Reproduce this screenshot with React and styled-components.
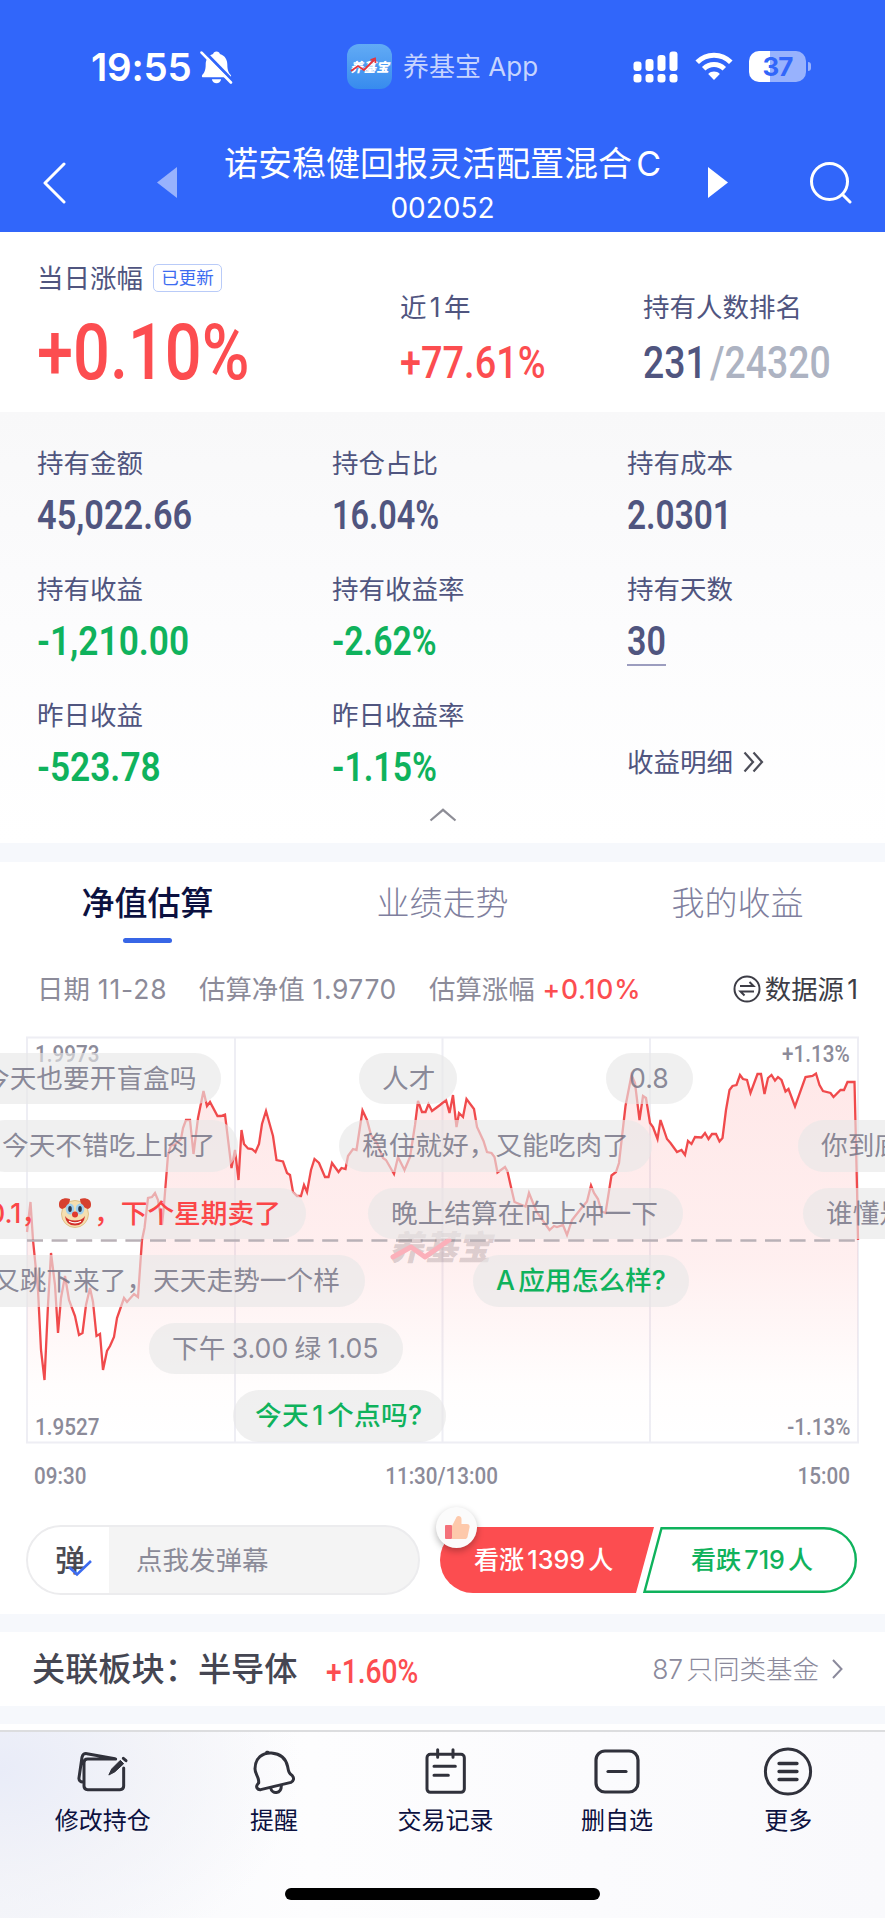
import React from "react";
import styled, { createGlobalStyle, css } from "styled-components";

const c = {
  blue: "#3166fa",
  red: "#fc4d50",
  green: "#0fb25c",
  navy: "#0c1140",
  indigo: "#50557f",
  muted: "#8c8b99",
  band: "#f6f8fc",
};

const GlobalStyle = createGlobalStyle`
  * { box-sizing: border-box; }
  body {
    margin: 0;
    background: #fff;
    font-family: Inter, "Noto Sans CJK SC", sans-serif;
    text-autospace: normal;
  }
`;

const Screen = styled.div`
  width: 885px;
  height: 1918px;
  overflow: hidden;
  display: flex;
  flex-direction: column;
  background: #fff;
`;

/* Condensed numerals */
const Num = styled.span`
  display: block;
  width: max-content;
  font-family: Roboto, sans-serif;
  font-weight: ${(p) => p.$weight || 600};
  font-size: ${(p) => p.$size}px;
  line-height: 1;
  letter-spacing: ${(p) => p.$track || 0}px;
  color: ${(p) => p.$color || c.indigo};
  transform: scaleX(${(p) => p.$scale || 0.84});
  transform-origin: ${(p) => p.$origin || "left"} center;
`;

/* ---------- header ---------- */
const Header = styled.header`
  height: 232px;
  flex: none;
  background: ${c.blue};
  color: #fff;
  display: flex;
  flex-direction: column;
`;

const StatusBar = styled.div`
  height: 133px;
  padding: 0 79px 0 91px;
  display: grid;
  grid-template-columns: 256px 1fr auto;
  align-items: center;
`;

const Clock = styled.div`
  display: flex;
  align-items: center;
  gap: 8px;
  font-size: 38.5px;
  font-weight: 600;
  line-height: 40px;
  letter-spacing: -0.2px;
`;

const AppTag = styled.div`
  display: flex;
  align-items: center;
  gap: 11px;
  font-size: 26px;
  color: #c6d4fe;
  line-height: 44px;
`;

const AppLogo = styled.div`
  width: 45px;
  height: 45px;
  border-radius: 12px;
  background: linear-gradient(#62abf5, #378bee);
  display: grid;
  place-items: center;
  position: relative;
  svg { position: absolute; left: 3px; top: 13px; }
`;

const LogoWord = styled.span`
  font-size: 13px;
  font-weight: 900;
  font-style: italic;
  color: #fff;
  line-height: 14px;
  white-space: nowrap;
`;

const StatusIcons = styled.div`
  display: flex;
  align-items: center;
  gap: 16px;
`;

const Battery = styled.div`
  width: 57px;
  height: 31px;
  border-radius: 10px;
  background: linear-gradient(90deg, #fff 37%, #98b2fd 37%);
  color: ${c.blue};
  font-size: 26px;
  font-weight: 700;
  line-height: 31px;
  text-align: center;
  letter-spacing: -1px;
  position: relative;
  &::after {
    content: "";
    position: absolute;
    right: -5px;
    top: 11px;
    width: 3px;
    height: 9px;
    border-radius: 0 3px 3px 0;
    background: #98b2fd;
  }
`;

const TitleBar = styled.div`
  height: 99px;
  padding: 0 33px 0 42px;
  display: grid;
  grid-template-columns: 115px 67px 437px 47px 20px 1fr;
  align-items: center;
  & > svg:last-child { justify-self: end; }
`;

const Title = styled.div`
  display: flex;
  flex-direction: column;
  align-items: center;
  white-space: nowrap;
  height: 99px;
  padding-top: 9px;
`;

const FundName = styled.h1`
  margin: 0;
  font-size: 34px;
  font-weight: 400;
  line-height: 44px;
`;

const FundCode = styled.div`
  font-size: 28px;
  line-height: 42px;
  padding-top: 1px;
`;

/* ---------- summary ---------- */
const Summary = styled.section`
  height: 180px;
  flex: none;
  padding-left: 37px;
  display: grid;
  grid-template-columns: 363px 243px 1fr;
`;

const SummaryCell = styled.div`
  padding-top: ${(p) => p.$top}px;
  display: flex;
  flex-direction: column;
  gap: ${(p) => p.$gap}px;
`;

const Label = styled.div`
  display: flex;
  align-items: center;
  gap: 10px;
  font-size: 26.5px;
  line-height: 28px;
  height: 28px;
  color: ${c.indigo};
  white-space: nowrap;
`;

const Tag = styled.span`
  height: 28px;
  width: 69px;
  border: 1.5px solid #b9cbf8;
  border-radius: 5px;
  color: #3d6cf0;
  font-size: 17.5px;
  line-height: 25px;
  text-align: center;
`;

const Faded = styled.span`
  color: #adb3c2;
  margin-left: 4px;
`;

const Holdings = styled.section`
  height: 431px;
  flex: none;
  padding: 37px 0 0 37px;
  background: linear-gradient(#f8f8f9, #fcfcfd 50%, #fff);
`;

const HoldingGrid = styled.div`
  display: grid;
  grid-template-columns: 295px 295px 1fr;
  grid-auto-rows: 126px;
`;

const Holding = styled.div`
  display: flex;
  flex-direction: column;
  align-items: flex-start;
  gap: 18px;
`;

const Underlined = styled.div`
  width: 39px;
  height: 45px;
  border-bottom: 2px solid #9c9dbf;
`;

const DetailLink = styled.div`
  display: flex;
  align-items: center;
  gap: 10px;
  padding-top: 47px;
  height: 75px;
  font-size: 26.5px;
  line-height: 28px;
  color: ${c.indigo};
`;

const Collapse = styled.div`
  display: flex;
  justify-content: center;
  margin: -19px 37px 0 0;
`;

const Band = styled.div`
  height: ${(p) => p.$h}px;
  flex: none;
  background: ${c.band};
`;

/* ---------- tabs & chart ---------- */
const Tabs = styled.nav`
  height: 82px;
  flex: none;
  display: grid;
  grid-template-columns: repeat(3, 1fr);
`;

const Tab = styled.div`
  display: flex;
  flex-direction: column;
  align-items: center;
  gap: 17px;
  padding-top: 24px;
  font-size: 33px;
  line-height: 35px;
  color: #7f7f9e;
  font-weight: 300;
  ${(p) =>
    p.$active &&
    css`
      color: ${c.navy};
      font-weight: 500;
      &::after {
        content: "";
        width: 49px;
        height: 5px;
        border-radius: 3px;
        background: #3866e6;
      }
    `}
`;

const Estimate = styled.div`
  flex: none;
  height: 30px;
  margin-top: 30px;
  padding: 0 27px 0 37px;
  display: flex;
  align-items: center;
  font-size: 26.4px;
  line-height: 30px;
  color: ${c.muted};
  white-space: nowrap;
`;

const EstItem = styled.span`
  display: flex;
  gap: 8px;
  width: ${(p) => p.$w}px;
`;

const EstNum = styled.span`
  letter-spacing: ${(p) => p.$track || 0}px;
  color: ${(p) => p.$color || "inherit"};
  font-weight: ${(p) => (p.$color ? 500 : 400)};
`;

const Source = styled.span`
  display: flex;
  align-items: center;
  gap: 4px;
  margin-left: auto;
  color: #3d3d46;
`;

const ChartBox = styled.div`
  flex: none;
  position: relative;
  width: 885px;
  height: 410px;
  margin-top: 32px;
  overflow: hidden;
  svg { display: block; }
`;

const Corner = styled.div`
  position: absolute;
  ${(p) => p.$side}: 35px;
  top: ${(p) => p.$top}px;
`;

const Watermark = styled.div`
  position: absolute;
  left: 389px;
  top: 192px;
  font-size: 34px;
  line-height: 40px;
  font-weight: 900;
  font-style: italic;
  color: rgba(120, 105, 110, 0.27);
  svg { position: absolute; left: 0; top: 5px; }
`;

const Bullet = styled.div`
  position: absolute;
  left: ${(p) => p.$x}px;
  top: ${(p) => 16.5 + p.$row * 67.5}px;
  width: ${(p) => p.$w}px;
  height: 51.5px;
  padding-left: ${(p) => p.$pad || 23}px;
  border-radius: 26px;
  background: rgba(232, 232, 232, 0.63);
  display: flex;
  align-items: center;
  font-size: 26.7px;
  line-height: 51px;
  white-space: nowrap;
  letter-spacing: ${(p) => p.$track || 0}px;
  word-spacing: -1.2px;
  color: ${(p) => p.$color || "rgba(110, 109, 128, 0.8)"};
  font-weight: ${(p) => (p.$color ? 500 : 400)};
`;

const TimeAxis = styled.div`
  flex: none;
  height: 79px;
  padding: 18px 35px 0 34px;
  display: flex;
  justify-content: space-between;
`;

/* ---------- barrage input and vote ---------- */
const ActionRow = styled.div`
  flex: none;
  height: 89px;
  padding: 0 28px 0 26px;
  display: flex;
  gap: 20px;
`;

const BarrageInput = styled.div`
  width: 394px;
  height: 70px;
  border: 2px solid #ececee;
  border-radius: 35px;
  overflow: hidden;
  display: flex;
  background: #f4f4f4;
  font-size: 26.5px;
  line-height: 67px;
  color: #8b8b98;
`;

const BarrageToggle = styled.div`
  width: 81px;
  margin-right: 27px;
  padding-left: 27px;
  background: #fff;
  font-size: 30px;
  font-weight: 500;
  line-height: 66px;
  color: #4a4a52;
  position: relative;
  svg { position: absolute; left: 39px; top: 32px; }
`;

const Vote = styled.div`
  position: relative;
  width: 417px;
  height: 66px;
  margin-top: 2px;
  & > svg { position: absolute; left: 0; top: 0; }
`;

const VoteLabels = styled.div`
  position: relative;
  display: grid;
  grid-template-columns: 34px 217px 1fr;
  height: 66px;
  line-height: 66px;
  font-size: 25.1px;
  font-weight: 500;
  white-space: nowrap;
`;

const VoteText = styled.span`
  color: ${(p) => p.$color};
`;

const Thumb = styled.div`
  position: absolute;
  left: -4px;
  top: -20px;
  width: 41px;
  height: 41px;
  border-radius: 50%;
  background: #fbfbfb;
  box-shadow: 0 3px 7px rgba(0, 0, 0, 0.28);
  display: grid;
  place-items: center;
`;

const Sector = styled.section`
  flex: none;
  height: 74px;
  padding: 0 42px 0 32px;
  display: flex;
  align-items: center;
  font-size: 33.2px;
  font-weight: 500;
  line-height: 40px;
  color: #454652;
  white-space: nowrap;
`;

const SectorChange = styled.div`
  padding: 3px 0 0 28px;
`;

const Similar = styled.div`
  margin-left: auto;
  display: flex;
  align-items: center;
  gap: 13px;
  font-size: 26.5px;
  font-weight: 300;
  color: #8b8a9c;
`;

/* ---------- bottom bar ---------- */
const BottomBar = styled.footer`
  flex: 1;
  margin-top: 6px;
  border-top: 2px solid #dcdddf;
  background:
    radial-gradient(ellipse 300px 210px at 0 20%, #e9ecf8 0%, rgba(240, 241, 247, 0.7) 50%, rgba(255, 255, 255, 0) 100%),
    linear-gradient(90deg, #f6f7fb 0%, #fdfdfe 35%, #f9f9fc 100%);
  display: flex;
  flex-direction: column;
  align-items: center;
`;

const Actions = styled.div`
  align-self: flex-start;
  width: 857px;
  margin-left: 17px;
  display: grid;
  grid-template-columns: repeat(5, 1fr);
`;

const Action = styled.div`
  display: flex;
  flex-direction: column;
  align-items: center;
  padding-top: 15px;
  gap: 11px;
  font-size: 24px;
  line-height: 28px;
  color: ${c.navy};
  svg { fill: none; stroke: #30313b; stroke-linecap: round; stroke-linejoin: round; }
`;

const HomeIndicator = styled.div`
  width: 315px;
  height: 12px;
  margin-top: 53px;
  border-radius: 6px;
  background: #000;
`;

/* ---------- chart data: x, y in screen pixels ---------- */
const PTS =
  "27,1232 30.5,1202 33,1240 38,1290 41,1350 44.5,1380 48,1305 51,1253 55,1285 58,1333 61,1298 65,1276 69,1300 75,1316 79,1335 82.5,1333 86,1305 90,1288 93,1302 96.5,1336 100,1334 103,1370 107,1351 110,1346 114,1337 117,1318 124,1298 127,1302 134,1294 138,1297 142,1240 144.5,1228 148,1198 152,1197 155,1193 158,1200 162,1225 164,1205 168,1155 171,1145 174,1145 181,1139 183,1128 186,1120 190,1120 193.5,1154 198,1118 203.5,1091 207,1106 210,1102 217.5,1116 221,1116 225,1114.5 231.5,1168 235,1150 238.5,1180 241.5,1130 244,1144 248,1148.5 252,1149 255.5,1152 259,1144 262,1124 266,1111 273,1136 276.5,1160 283,1161.5 287,1173 290,1175 293,1192 297,1196 301,1196 304,1185 307,1192 311,1170 314.5,1159 319,1163 325,1177 328.5,1177 332,1163 338.5,1172 341.5,1168 345.5,1169 348,1156 353,1149 356.5,1150 362.5,1110.5 367,1120 371,1135 377,1143 383,1158 386,1160 394,1174 398,1157 404.5,1170 410,1157 415,1125 418,1101 422,1112 425.5,1112 428.5,1104 432,1111 436,1108 440,1105 446,1100 449.5,1113 453,1095 456.5,1127 459,1113 463,1117 466.5,1099 474,1109 477,1127 483.5,1141 487,1152 491.5,1153 494.5,1157 497.5,1172.5 505,1167 507.5,1171.5 511,1187 514.5,1202 525.5,1206.5 529,1193 536.5,1211.5 549.5,1230 554,1226 557,1227 563,1225 567,1235 572,1220 581.5,1208 587,1201.5 591,1185.5 594,1193 598,1199 601.5,1211.5 605.5,1213 611.5,1175.5 616,1172 619,1163 625.5,1106 631.5,1075 635,1083 639.5,1120 643,1096 646,1098 650,1123 653,1127 657.5,1139 660.5,1120 667,1139 670.5,1143 677,1152 681.5,1150 685,1155 688,1141 691.5,1144 695,1137 701.5,1137.5 705,1133 708.5,1139 712,1134 716,1134 719.5,1141.5 722.5,1138 726,1110 729.5,1090 732.5,1086 736.5,1085 740,1075 743,1079 747,1080 750.5,1093 757.5,1074 761,1074 764.5,1094 768,1078 771.5,1075 775,1080.5 778,1077 781.5,1080 785.5,1091.5 788.5,1089 795,1106.5 805.5,1077 812.5,1076 816,1073.5 819.5,1085 823,1091 830.5,1093 833.5,1097 840.5,1090 844,1090 847.5,1082 854.5,1082 857,1187 858,1240";

const HOLDINGS = [
  { label: "持有金额", value: "45,022.66", scale: 0.838 },
  { label: "持仓占比", value: "16.04%", scale: 0.79 },
  { label: "持有成本", value: "2.0301", scale: 0.815 },
  { label: "持有收益", value: "-1,210.00", color: c.green, scale: 0.86 },
  { label: "持有收益率", value: "-2.62%", color: c.green, scale: 0.822 },
  { label: "持有天数", value: "30", underline: true, scale: 0.83 },
  { label: "昨日收益", value: "-523.78", color: c.green, scale: 0.86 },
  { label: "昨日收益率", value: "-1.15%", color: c.green, scale: 0.825 },
];

const ClownFace = styled.svg`
  flex: none;
  margin: 0 2px 0 10px;
`;

const Clown = () => (
  <ClownFace width="34" height="32" viewBox="0 0 34 32">
    <circle cx="17" cy="17" r="13.5" fill="#f5dfb0" stroke="#d9b779" strokeWidth="0.8" />
    <path d="M1 7C1 2 7 0 12 2C12 7 8 11 4 12C1 11 1 9 1 7ZM33 7C33 2 27 0 22 2C22 7 26 11 30 12C33 11 33 9 33 7Z" fill="#d6402f" />
    <ellipse cx="12" cy="12" rx="4.3" ry="5.5" fill="#9fd0ef" />
    <ellipse cx="22" cy="12" rx="4.3" ry="5.5" fill="#9fd0ef" />
    <ellipse cx="12" cy="12" rx="1.8" ry="3" fill="#303848" />
    <ellipse cx="22" cy="12" rx="1.8" ry="3" fill="#303848" />
    <circle cx="17" cy="17.5" r="3" fill="#e03a2e" />
    <path d="M7 19Q8 28.500 17 28.500T27 19Q24 23.500 17 23.500T7 19Z" fill="#d22f2b" />
    <path d="M11 24.300Q17 27.500 23 24.300" fill="none" stroke="#fff" strokeWidth="1.300" />
  </ClownFace>
);

const Chart = () => (
  <svg width="885" height="410" viewBox="0 1036 885 410" fill="none">
    <defs>
      <linearGradient id="area" x1="0" y1="1074" x2="0" y2="1442" gradientUnits="userSpaceOnUse">
        <stop offset="0" stopColor="#fc4d50" stopOpacity="0.13" />
        <stop offset="0.5" stopColor="#fc4d50" stopOpacity="0.09" />
        <stop offset="0.85" stopColor="#fc4d50" stopOpacity="0.01" />
        <stop offset="1" stopColor="#fc4d50" stopOpacity="0" />
      </linearGradient>
    </defs>
    <path d="M27 1037.500H858V1442.500H27ZM235 1037V1442M442.500 1037V1442M650 1037V1442" stroke="#eeeef4" strokeWidth="2" />
    <polygon points={`27,1442 ${PTS} 858,1442`} fill="url(#area)" />
    <polyline points={PTS} stroke="#f04a4c" strokeWidth="2.3" strokeLinejoin="miter" />
    <path d="M27 1240.500H858" stroke="#b9b1b7" strokeWidth="2.500" strokeDasharray="16 8.600" />
  </svg>
);

export default function App() {
  return (
    <Screen>
      <GlobalStyle />
      <Header>
        <StatusBar>
          <Clock>
            19:55
            <svg width="33" height="34" viewBox="0 0 32 33" fill="#fff">
              <path d="M16 1.500C17.800 1.500 19 2.500 19.300 4C24.500 5.500 26.500 10 26.500 14C26.500 20 28 22 30 24.500C30.500 25.500 30 26.500 29 26.500H3C2 26.500 1.500 25.500 2 24.500C4 22 5.500 20 5.500 14C5.500 10 7.500 5.500 12.700 4C13 2.500 14.200 1.500 16 1.500Z" />
              <path d="M11.500 28.500H20.500C20 31 18.300 32.300 16 32.300S12 31 11.500 28.500Z" />
              <path d="M3.200 0.500L31.500 29.500" stroke={c.blue} strokeWidth="3" />
              <path d="M1.500 2.500L30 31.500" stroke="#fff" strokeWidth="2.600" strokeLinecap="round" />
            </svg>
          </Clock>
          <AppTag>
            <AppLogo>
              <LogoWord>养基宝</LogoWord>
              <svg width="32" height="17" viewBox="0 0 32 17" fill="none" stroke="#e3353f" strokeWidth="1.800">
                <path d="M1 14L8 9L14 13L24 3M20.500 3L25 1.500L25.500 6" />
              </svg>
            </AppLogo>
            <span>养基宝 App</span>
          </AppTag>
          <StatusIcons>
            <svg width="46" height="32" viewBox="0 0 46 32" fill="#fff">
              <rect x="0.500" y="10.500" width="8" height="9.500" rx="3" />
              <rect x="12.500" y="8" width="8" height="12" rx="3" />
              <rect x="24.500" y="4" width="8" height="16" rx="3" />
              <rect x="36.500" y="0.500" width="8" height="19.500" rx="3" />
              <rect x="0.500" y="23" width="8" height="8.500" rx="3" />
              <rect x="12.500" y="23" width="8" height="8.500" rx="3" />
              <rect x="24.500" y="23" width="8" height="8.500" rx="3" />
              <rect x="36.500" y="23" width="8" height="8.500" rx="3" />
            </svg>
            <svg width="38" height="29" viewBox="0 0 38 29" fill="none" stroke="#fff" strokeWidth="5">
              <path d="M2.200 10.300C11.500 0.800 26.500 0.800 35.800 10.300" />
              <path d="M8.700 16.800C14.500 11.200 23.500 11.200 29.300 16.800" />
              <path d="M19 28L13.200 22C16.500 18.800 21.500 18.800 24.800 22Z" fill="#fff" stroke="none" />
            </svg>
            <Battery>37</Battery>
          </StatusIcons>
        </StatusBar>
        <TitleBar>
          <svg width="24" height="42" viewBox="0 0 24 42" fill="none" stroke="#fff" strokeWidth="3" strokeLinecap="round" strokeLinejoin="round">
            <path d="M22 2L3 21L22 40" />
          </svg>
          <svg width="20" height="31" viewBox="0 0 20 31"><path d="M20 0V31L0 15.500Z" fill="#98b2fd" /></svg>
          <Title>
            <FundName>诺安稳健回报灵活配置混合C</FundName>
            <FundCode>002052</FundCode>
          </Title>
          <i />
          <svg width="20" height="31" viewBox="0 0 20 31"><path d="M0 0V31L20 15.500Z" fill="#fff" /></svg>
          <svg width="42" height="42" viewBox="0 0 42 42" fill="none" stroke="#fff" strokeWidth="3" strokeLinecap="round">
            <circle cx="19.500" cy="19.500" r="18" />
            <path d="M32.500 32.500L40 40" />
          </svg>
        </TitleBar>
      </Header>

      <Summary>
        <SummaryCell $top={32} $gap={22}>
          <Label>当日涨幅<Tag>已更新</Tag></Label>
          <Num $size={78} $weight={500} $color={c.red} $scale={0.832}>+0.10%</Num>
        </SummaryCell>
        <SummaryCell $top={61} $gap={19}>
          <Label>近1年</Label>
          <Num $size={45} $weight={500} $color={c.red} $scale={0.842}>+77.61%</Num>
        </SummaryCell>
        <SummaryCell $top={61} $gap={19}>
          <Label>持有人数排名</Label>
          <Num $size={45} $weight={500} $scale={0.83}>231<Faded>/24320</Faded></Num>
        </SummaryCell>
      </Summary>

      <Holdings>
        <HoldingGrid>
          {HOLDINGS.map((h) => {
            const num = <Num $size={41} $color={h.color} $scale={h.scale}>{h.value}</Num>;
            return (
              <Holding key={h.label}>
                <Label>{h.label}</Label>
                {h.underline ? <Underlined>{num}</Underlined> : num}
              </Holding>
            );
          })}
          <DetailLink>
            收益明细
            <svg width="21" height="22" viewBox="0 0 21 22" fill="none" stroke="#4c4d58" strokeWidth="2.200">
              <path d="M1.500 1.500L10 11L1.500 20.500M10.500 1.500L19 11L10.500 20.500" />
            </svg>
          </DetailLink>
        </HoldingGrid>
        <Collapse>
          <svg width="28" height="14" viewBox="0 0 28 14" fill="none" stroke="#8d8d96" strokeWidth="2.200">
            <path d="M1.500 12.500L14 1.800L26.500 12.500" />
          </svg>
        </Collapse>
      </Holdings>

      <Band $h={19} />

      <Tabs>
        <Tab $active>净值估算</Tab>
        <Tab>业绩走势</Tab>
        <Tab>我的收益</Tab>
      </Tabs>
      <Estimate>
        <EstItem $w={162}>日期<EstNum $track={0.9}>11-28</EstNum></EstItem>
        <EstItem $w={230}>估算净值<EstNum $track={0.6}>1.9770</EstNum></EstItem>
        <EstItem $w={220}>估算涨幅<EstNum $color={c.red} $track={0.8}>+0.10%</EstNum></EstItem>
        <Source>
          <svg width="28" height="28" viewBox="0 0 28 28" fill="none" stroke="#3d3d46" strokeWidth="2">
            <circle cx="14" cy="14" r="12.500" />
            <path d="M7 11H20.500L16.500 7M21 16.500H7.500L11.500 20.500" />
          </svg>
          数据源1
        </Source>
      </Estimate>

      <ChartBox>
        <Chart />
        <Corner $side="left" $top={6}><Num $size={24} $weight={500} $scale={0.86} $color={c.muted}>1.9973</Num></Corner>
        <Corner $side="left" $top={379}><Num $size={24} $weight={500} $scale={0.86} $color={c.muted}>1.9527</Num></Corner>
        <Corner $side="right" $top={6}><Num $size={24} $weight={500} $scale={0.86} $origin="right" $color={c.muted}>+1.13%</Num></Corner>
        <Corner $side="right" $top={379}><Num $size={24} $weight={500} $scale={0.86} $origin="right" $color={c.muted}>-1.13%</Num></Corner>
        <Watermark>
          养基宝
          <svg width="90" height="30" viewBox="0 0 90 30" fill="none" stroke="#fbb0ba" strokeWidth="5" strokeLinejoin="round" strokeLinecap="round">
            <path d="M4 24L22 14L36 24L60 7" />
          </svg>
        </Watermark>
        <Bullet $row={0} $x={-42} $w={263} $pad={25}>今天也要开盲盒吗</Bullet>
        <Bullet $row={0} $x={359} $w={98}>人才</Bullet>
        <Bullet $row={0} $x={606} $w={87}>0.8</Bullet>
        <Bullet $row={1} $x={-21} $w={259}>今天不错吃上肉了</Bullet>
        <Bullet $row={1} $x={339} $w={313}>稳住就好，又能吃肉了</Bullet>
        <Bullet $row={1} $x={798} $w={140}>你到底</Bullet>
        <Bullet $row={2} $x={-35} $w={341} $color="#fb4648">0.1，<Clown />，下个星期卖了</Bullet>
        <Bullet $row={2} $x={368} $w={315}>晚上结算在向上冲一下</Bullet>
        <Bullet $row={2} $x={803} $w={140}>谁懂是</Bullet>
        <Bullet $row={3} $x={-31} $w={396} $pad={24}>又跳下来了，天天走势一个样</Bullet>
        <Bullet $row={3} $x={473} $w={216} $color={c.green}>A应用怎么样?</Bullet>
        <Bullet $row={4} $x={149} $w={254}>下午 3.00 绿 1.05</Bullet>
        <Bullet $row={5} $x={233} $w={213} $color={c.green} $pad={22} $track={0.3}>今天1个点吗?</Bullet>
      </ChartBox>
      <TimeAxis>
        <Num $size={24} $weight={500} $scale={0.86} $color={c.muted}>09:30</Num>
        <Num $size={24} $weight={500} $scale={0.86} $origin="center" $color={c.muted}>11:30/13:00</Num>
        <Num $size={24} $weight={500} $scale={0.86} $origin="right" $color={c.muted}>15:00</Num>
      </TimeAxis>

      <ActionRow>
        <BarrageInput>
          <BarrageToggle>
            弹
            <svg width="26" height="20" viewBox="0 0 26 20" fill="none" stroke="#3d6cf0" strokeWidth="2.600">
              <path d="M2 8L10 15.500L24 2" />
            </svg>
          </BarrageToggle>
          点我发弹幕
        </BarrageInput>
        <Vote>
          <svg width="417" height="66" viewBox="0 0 417 66">
            <path d="M33 0H214L196 66H33A33 33 0 0 1 33 0Z" fill={c.red} />
            <path d="M221.500 1.200H384A31.800 31.800 0 0 1 384 64.800H204.500Z" fill="#fff" stroke={c.green} strokeWidth="2.400" />
          </svg>
          <VoteLabels>
            <i />
            <VoteText $color="#fff">看涨1399人</VoteText>
            <VoteText $color={c.green}>看跌719人</VoteText>
          </VoteLabels>
          <Thumb>
            <svg width="26" height="26" viewBox="0 0 26 26">
              <rect x="1" y="10" width="7" height="14" rx="1" fill="#f4717a" />
              <path d="M8 11L12.500 2C14 0 17.500 1 17.500 4V9H23C25 9 26 10.500 25.500 12.500L23.500 22C23 23.500 22 24 21 24H8Z" fill="#fdc9ab" />
            </svg>
          </Thumb>
        </Vote>
      </ActionRow>

      <Band $h={18} />
      <Sector>
        关联板块：半导体
        <SectorChange><Num $size={34} $weight={500} $scale={0.83} $color={c.red}>+1.60%</Num></SectorChange>
        <Similar>
          87只同类基金
          <svg width="11" height="20" viewBox="0 0 11 20" fill="none" stroke="#8b8a9c" strokeWidth="2">
            <path d="M1 1L9.500 10L1 19" />
          </svg>
        </Similar>
      </Sector>
      <Band $h={18} />

      <BottomBar>
        <Actions>
          <Action>
            <svg width="52" height="49" viewBox="52 32 156 147" strokeWidth="9">
              <path d="M168 68H84Q73 68 73 79V149Q73 160 84 160H181Q192 160 192 149V95M72 138Q56 136 58 124L67 63Q69 50 82 52L166 67" />
              <path d="M148 115L156 98L182 72L192 82L166 106Z" fill="#30313b" strokeWidth="3" />
              <path d="M191 66L199 73" strokeWidth="9" />
            </svg>
            修改持仓
          </Action>
          <Action>
            <svg width="45" height="49" viewBox="580 33 135 147" strokeWidth="9">
              <path d="M600 141C602 122 589 116 589 98C589 66 612 50 638 51C665 53 682 68 687 92C690 110 692 112 701 119C708 127 704 136 697 139L606 161C596 162 591 153 596 146Q600 141 600 138" />
              <path d="M636 156C640 176 668 174 668 149M624 49L628 49" />
            </svg>
            提醒
          </Action>
          <Action>
            <svg width="45" height="49" viewBox="1090 33 135 147" strokeWidth="9">
              <rect x="1102" y="55" width="112" height="114" rx="10" />
              <path d="M1134 41V64M1180 41V64M1123 91H1187M1123 118H1166" />
            </svg>
            交易记录
          </Action>
          <Action>
            <svg width="46" height="49" viewBox="0 0 46 49" strokeWidth="3.2">
              <rect x="2" y="4" width="42" height="41" rx="9" />
              <path d="M14 24.500H32" />
            </svg>
            删自选
          </Action>
          <Action>
            <svg width="50" height="49" viewBox="0 0 50 49" strokeWidth="3">
              <circle cx="25" cy="24.500" r="22.600" />
              <path d="M16 16.500H34M16 24.500H34M16 32.500H34" strokeWidth="3.3" />
            </svg>
            更多
          </Action>
        </Actions>
        <HomeIndicator />
      </BottomBar>
    </Screen>
  );
}
